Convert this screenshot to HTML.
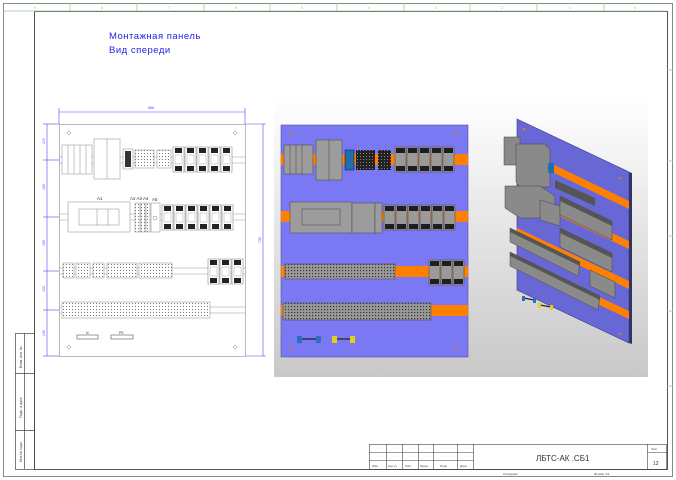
<!DOCTYPE html>
<html><head><meta charset="utf-8"><style>
html,body{margin:0;padding:0;background:#fff;}
svg{display:block}
text{font-family:"Liberation Sans","DejaVu Sans",sans-serif}
</style></head><body>
<svg width="676" height="480" viewBox="0 0 676 480" xmlns="http://www.w3.org/2000/svg">
<defs>
<linearGradient id="bg" x1="0" y1="0" x2="0" y2="1">
<stop offset="0" stop-color="#ffffff"/><stop offset="1" stop-color="#c8c8c8"/></linearGradient>
<g id="rl"><rect x="0" y="0" width="11" height="25" fill="#fff" stroke="#777" stroke-width="0.5"/><rect x="2" y="1" width="7" height="5" fill="#222"/><rect x="2" y="19" width="7" height="5" fill="#222"/><rect x="2" y="8" width="7" height="9" fill="#fff" stroke="#999" stroke-width="0.4"/></g>
<g id="rr"><rect x="0" y="0" width="11" height="25" fill="#9a9a9a" stroke="#444" stroke-width="0.5"/><rect x="1" y="1" width="9" height="5" fill="#1e1e1e"/><rect x="1" y="19" width="9" height="5" fill="#1e1e1e"/></g>
<pattern id="tl" width="3" height="3" patternUnits="userSpaceOnUse"><rect width="3" height="3" fill="#fff"/><rect x="0" y="0" width="1" height="1" fill="#777"/></pattern>
<pattern id="tr" width="3" height="3" patternUnits="userSpaceOnUse"><rect width="3" height="3" fill="#9a9a9a"/><rect x="0" y="0" width="1.2" height="1.2" fill="#333"/></pattern>
<pattern id="td" width="3" height="3" patternUnits="userSpaceOnUse"><rect width="3" height="3" fill="#222"/><rect x="0" y="0" width="1" height="1" fill="#888"/></pattern>
</defs>
<rect width="676" height="480" fill="#fff"/>
<rect x="3.5" y="3.5" width="669" height="473" fill="none" stroke="#888" stroke-width="1"/>
<rect x="34.5" y="11.5" width="633" height="458" fill="none" stroke="#555" stroke-width="1"/>
<g stroke="#9c9" stroke-width="0.8">
<line x1="3" y1="11" x2="667" y2="11"/>
<line x1="70" y1="3" x2="70" y2="11"/><line x1="137" y1="3" x2="137" y2="11"/><line x1="204" y1="3" x2="204" y2="11"/><line x1="270" y1="3" x2="270" y2="11"/><line x1="337" y1="3" x2="337" y2="11"/><line x1="404" y1="3" x2="404" y2="11"/><line x1="470" y1="3" x2="470" y2="11"/><line x1="537" y1="3" x2="537" y2="11"/><line x1="604" y1="3" x2="604" y2="11"/>
<line x1="667" y1="70" x2="673" y2="70"/><line x1="667" y1="161" x2="673" y2="161"/><line x1="667" y1="236" x2="673" y2="236"/><line x1="667" y1="311" x2="673" y2="311"/><line x1="667" y1="386" x2="673" y2="386"/>
</g>
<g font-size="4" fill="#9c9" text-anchor="middle"><text x="35" y="9">9</text><text x="102" y="9">8</text><text x="169" y="9">7</text><text x="236" y="9">6</text><text x="302" y="9">5</text><text x="369" y="9">4</text><text x="436" y="9">3</text><text x="502" y="9">2</text><text x="570" y="9">1</text><text x="635" y="9">0</text></g>
<g stroke="#444" stroke-width="0.7" fill="none"><rect x="15.5" y="333.5" width="19" height="136"/><line x1="24.5" y1="333" x2="24.5" y2="469"/><line x1="15" y1="373.5" x2="34" y2="373.5"/><line x1="15" y1="430.5" x2="34" y2="430.5"/></g>
<g font-size="3.5" fill="#444"><text transform="translate(22,368) rotate(-90)">Взам. инв. №</text><text transform="translate(22,418) rotate(-90)">Подп. и дата</text><text transform="translate(22,462) rotate(-90)">Инв.№ подл.</text></g>
<g font-size="9.5" fill="#2323e8" letter-spacing="0.5"><text x="109" y="39">Монтажная панель</text><text x="109" y="53">Вид спереди</text></g>

<g stroke="#4a4af0" stroke-width="0.6" fill="none">
<line x1="59" y1="112" x2="245" y2="112"/><line x1="59" y1="108" x2="59" y2="124"/><line x1="245" y1="108" x2="245" y2="124"/>
<line x1="47" y1="124" x2="47" y2="356"/><line x1="43" y1="124" x2="59" y2="124"/><line x1="43" y1="356" x2="59" y2="356"/>
<line x1="43" y1="160" x2="59" y2="160"/><line x1="43" y1="217" x2="59" y2="217"/><line x1="43" y1="271" x2="59" y2="271"/><line x1="43" y1="310" x2="59" y2="310"/>
<line x1="263" y1="124" x2="263" y2="356"/><line x1="245" y1="124" x2="266" y2="124"/><line x1="245" y1="356" x2="266" y2="356"/>
</g>
<g font-size="3.5" fill="#4a4af0"><text x="148" y="109">586</text>
<text transform="translate(45,144) rotate(-90)">115</text><text transform="translate(45,190) rotate(-90)">180</text><text transform="translate(45,246) rotate(-90)">165</text><text transform="translate(45,292) rotate(-90)">122</text><text transform="translate(45,336) rotate(-90)">145</text><text transform="translate(261,243) rotate(-90)">730</text></g>
<rect x="59.5" y="124.5" width="186" height="232" fill="#fff" stroke="#aaa" stroke-width="0.8"/>
<g fill="#fff" stroke="#888" stroke-width="0.5"><circle cx="69" cy="133" r="1.5"/><circle cx="235" cy="133" r="1.5"/><circle cx="69" cy="347" r="1.5"/><circle cx="235" cy="347" r="1.5"/></g>
<g stroke="#999" stroke-width="0.6"><line x1="59" y1="157" x2="245" y2="157"/><line x1="59" y1="163" x2="245" y2="163"/><line x1="59" y1="214" x2="245" y2="214"/><line x1="59" y1="220" x2="245" y2="220"/><line x1="59" y1="268" x2="245" y2="268"/><line x1="59" y1="274" x2="245" y2="274"/><line x1="59" y1="307" x2="245" y2="307"/><line x1="59" y1="313" x2="245" y2="313"/></g>
<g fill="#fff" stroke="#888" stroke-width="0.5">
<rect x="62" y="145" width="30" height="29"/><line x1="68" y1="145" x2="68" y2="174"/><line x1="74" y1="145" x2="74" y2="174"/><line x1="80" y1="145" x2="80" y2="174"/><line x1="86" y1="145" x2="86" y2="174"/>
<rect x="94" y="139" width="26" height="40"/><line x1="107" y1="139" x2="107" y2="179"/>
<rect x="123" y="149" width="10" height="20" fill="#fff"/>
<rect x="135" y="150" width="19" height="18" fill="url(#tl)"/>
<rect x="157" y="150" width="14" height="18" fill="url(#tl)"/>
</g>
<rect x="125" y="151" width="6" height="16" fill="#333"/>
<use href="#rl" x="173" y="147"/><use href="#rl" x="185" y="147"/><use href="#rl" x="197" y="147"/><use href="#rl" x="209" y="147"/><use href="#rl" x="221" y="147"/>
<g fill="#fff" stroke="#888" stroke-width="0.5">
<rect x="68" y="202" width="62" height="30"/><rect x="79" y="209" width="40" height="16"/><line x1="97" y1="209" x2="97" y2="225"/><line x1="108" y1="209" x2="108" y2="225"/>
<rect x="135" y="203" width="5" height="29" fill="url(#tl)"/><rect x="141" y="203" width="4" height="29" fill="url(#tl)"/><rect x="146" y="203" width="4" height="29" fill="url(#tl)"/>
<rect x="151" y="203" width="9" height="29"/><circle cx="155" cy="218" r="2"/>
</g>
<g font-size="4.5" fill="#333"><text x="97" y="200">A1</text><text x="130" y="200">A2 A3 A4</text><text x="152" y="201">A5</text></g>
<use href="#rl" x="162" y="205"/><use href="#rl" x="174" y="205"/><use href="#rl" x="186" y="205"/><use href="#rl" x="198" y="205"/><use href="#rl" x="210" y="205"/><use href="#rl" x="222" y="205"/>
<g stroke="#888" stroke-width="0.5" fill="url(#tl)">
<rect x="63" y="263" width="11" height="15"/><rect x="76" y="263" width="14" height="15"/><rect x="93" y="263" width="11" height="15"/><rect x="107" y="263" width="30" height="15"/><rect x="139" y="263" width="33" height="15"/></g>
<use href="#rl" x="208" y="259"/><use href="#rl" x="220" y="259"/><use href="#rl" x="232" y="259"/>
<rect x="62" y="302" width="148" height="16" fill="url(#tl)" stroke="#888" stroke-width="0.5"/>
<g font-size="3.5" fill="#333"><text x="86" y="334">N</text><text x="119" y="334">PE</text></g>
<g stroke="#555" stroke-width="0.6" fill="#fff"><rect x="77" y="335" width="21" height="4"/><rect x="111" y="335" width="22" height="4"/></g>

<rect x="274" y="97" width="374" height="280" fill="url(#bg)"/>
<rect x="281" y="125" width="187" height="232" fill="#7b78f3" stroke="#5050a0" stroke-width="0.6"/>
<g fill="#c08030"><circle cx="291" cy="134" r="1.4"/><circle cx="457" cy="134" r="1.4"/><circle cx="291" cy="348" r="1.4"/><circle cx="457" cy="348" r="1.4"/></g>
<g fill="#ff8000"><rect x="281" y="154" width="187" height="11"/><rect x="281" y="211" width="187" height="11"/><rect x="281" y="266" width="187" height="11"/><rect x="281" y="305" width="187" height="11"/></g>
<g fill="#9c9c9c" stroke="#444" stroke-width="0.5">
<rect x="284" y="145" width="29" height="29"/><line x1="290" y1="145" x2="290" y2="174"/><line x1="296" y1="145" x2="296" y2="174"/><line x1="302" y1="145" x2="302" y2="174"/>
<rect x="316" y="140" width="26" height="40"/><line x1="329" y1="140" x2="329" y2="180"/>
<rect x="290" y="202" width="62" height="31"/><rect x="302" y="209" width="38" height="16"/>
<rect x="352" y="203" width="23" height="30"/>
<rect x="375" y="203" width="7" height="30"/>
</g>
<rect x="345" y="150" width="9" height="20" fill="#2070b0" stroke="#113" stroke-width="0.5"/>
<rect x="356" y="150" width="19" height="20" fill="url(#td)"/><rect x="378" y="150" width="13" height="20" fill="url(#td)"/>
<use href="#rr" x="395" y="147"/><use href="#rr" x="407" y="147"/><use href="#rr" x="419" y="147"/><use href="#rr" x="431" y="147"/><use href="#rr" x="443" y="147"/>
<use href="#rr" x="384" y="205"/><use href="#rr" x="396" y="205"/><use href="#rr" x="408" y="205"/><use href="#rr" x="420" y="205"/><use href="#rr" x="432" y="205"/><use href="#rr" x="444" y="205"/>
<rect x="285" y="264" width="110" height="15" fill="url(#tr)" stroke="#444" stroke-width="0.5"/>
<use href="#rr" x="429" y="260"/><use href="#rr" x="441" y="260"/><use href="#rr" x="453" y="260"/>
<rect x="283" y="303" width="148" height="17" fill="url(#tr)" stroke="#444" stroke-width="0.5"/>
<g stroke="#222" stroke-width="1.2"><line x1="300" y1="339" x2="318" y2="339"/><line x1="334" y1="339" x2="353" y2="339"/></g>
<g fill="#2a70c0"><rect x="297" y="336" width="5" height="7"/><rect x="316" y="336" width="5" height="7"/></g>
<g fill="#e0d020"><rect x="332" y="336" width="5" height="7"/><rect x="350" y="336" width="5" height="7"/></g>

<polygon points="517,119 629,172 629,343 517,290" fill="#6867d6" stroke="#3a3a90" stroke-width="0.6"/>
<polygon points="629,172 632,173 632,344 629,343" fill="#333366"/>
<g fill="#ff8000"><polygon points="517,147 629,201 629,209 517,155"/><polygon points="517,188 629,241 629,249 517,196"/><polygon points="517,228 629,281 629,289 517,236"/><polygon points="517,258 629,311 629,319 517,266"/></g>
<g fill="#c08030"><circle cx="524" cy="129" r="1.3"/><circle cx="620" cy="178" r="1.3"/><circle cx="620" cy="334" r="1.3"/></g>
<g fill="#8a8a8a" stroke="#444" stroke-width="0.5">
<polygon points="504,137 520,137 520,165 504,165"/>
<polygon points="516,144 545,144 550,150 550,187 520,187 516,182"/>
<polygon points="505,186 540,186 555,196 555,218 520,218 505,208"/>
<polygon points="540,200 560,206 560,226 540,220"/>
<polygon points="560,196 612,221 612,240 560,215"/>
<polygon points="560,228 612,253 612,272 560,247"/>
<polygon points="510,228 580,262 578,276 510,242"/>
<polygon points="510,252 600,296 598,310 510,266"/>
<polygon points="590,270 615,282 615,298 590,286"/>
</g>
<g fill="#555"><polygon points="555,180 595,198 595,206 555,188"/><polygon points="560,196 612,221 612,226 560,201"/><polygon points="560,228 612,253 612,258 560,233"/><polygon points="510,228 580,262 580,266 510,232"/><polygon points="510,252 600,296 600,300 510,256"/></g>
<rect x="548" y="163" width="6" height="10" fill="#2070b0"/>
<g stroke="#222" stroke-width="1.2"><line x1="524" y1="298" x2="534" y2="300"/><line x1="540" y1="305" x2="551" y2="307"/></g>
<g fill="#2a70c0"><rect x="522" y="296" width="3" height="5"/><rect x="533" y="298" width="3" height="5"/></g>
<g fill="#e0d020"><rect x="538" y="303" width="3" height="5"/><rect x="550" y="305" width="3" height="5"/></g>

<g stroke="#444" stroke-width="0.6" fill="none">
<rect x="369.5" y="444.5" width="297" height="25"/>
<line x1="369" y1="452.5" x2="473" y2="452.5"/><line x1="369" y1="460.5" x2="473" y2="460.5"/>
<line x1="386.5" y1="444" x2="386.5" y2="469"/><line x1="402.5" y1="444" x2="402.5" y2="469"/><line x1="418.5" y1="444" x2="418.5" y2="469"/><line x1="433.5" y1="444" x2="433.5" y2="469"/><line x1="457.5" y1="444" x2="457.5" y2="469"/><line x1="473.5" y1="444" x2="473.5" y2="469"/><line x1="647.5" y1="444" x2="647.5" y2="469"/><line x1="647" y1="452.5" x2="667" y2="452.5"/>
</g>
<g font-size="3" fill="#444"><text x="372" y="467">Изм.</text><text x="388" y="467">Кол.уч</text><text x="405" y="467">Лист</text><text x="420" y="467">№док.</text><text x="440" y="467">Подп.</text><text x="460" y="467">Дата</text><text x="651" y="450">Лист</text><text x="503" y="475">Копировал</text><text x="594" y="475">Формат  А3</text></g>
<text x="536" y="461" font-size="8" fill="#333">ЛБТС-АК .СБ1</text>
<text x="653" y="465" font-size="5" fill="#333">12</text>
</svg>
</body></html>
